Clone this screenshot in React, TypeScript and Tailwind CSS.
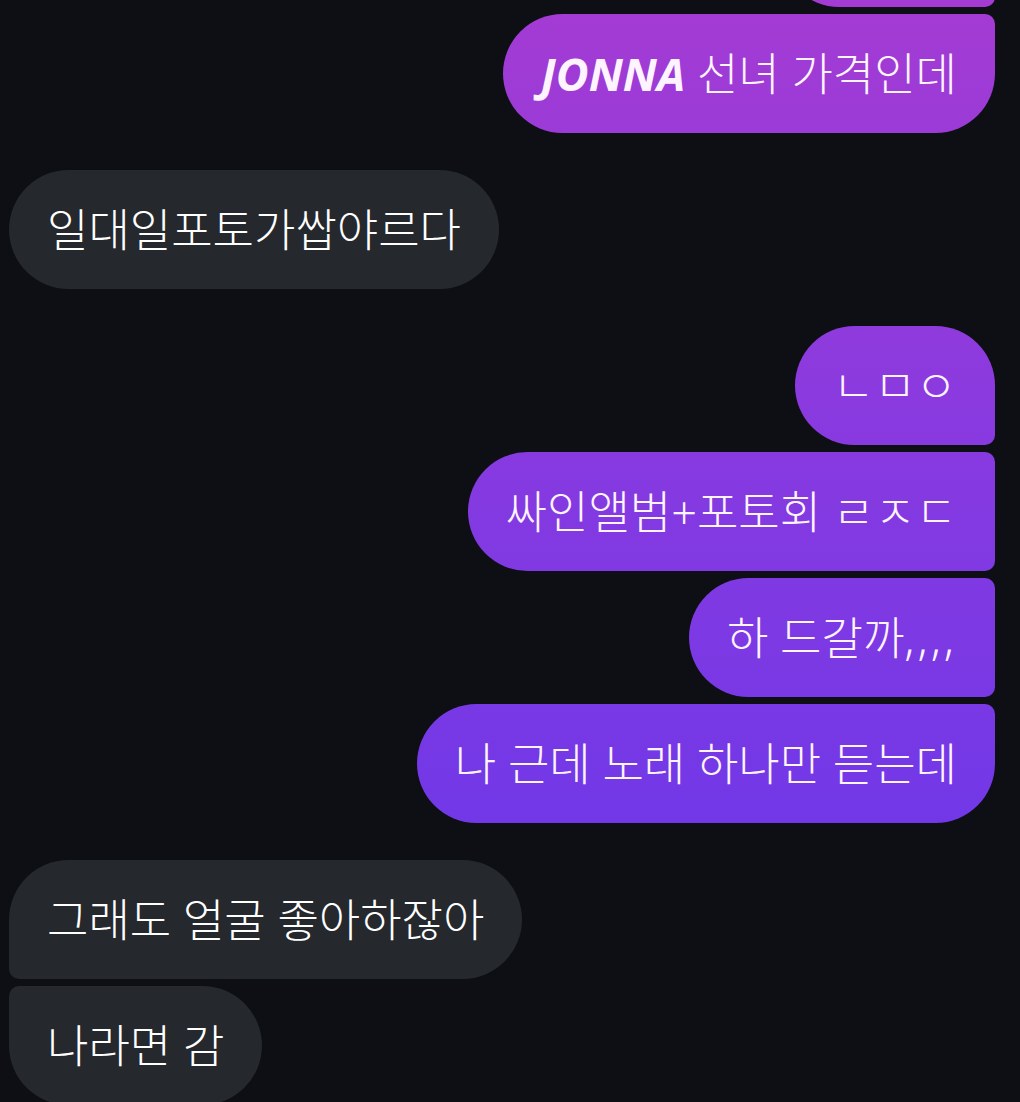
import React from "react";

type Msg = {
  side: "me" | "them";
  text: React.ReactNode;
  corners: string;
  gapTop: string;
};

const font = { fontFamily: '"Noto Sans", "Noto Sans CJK KR", sans-serif' };

const messages: Msg[] = [
  {
    side: "me",
    text: (
      <>
        <span className="font-bold italic">JONNA</span> 선녀 가격인데
      </>
    ),
    corners: "rounded-[60px] rounded-tr-[10px]",
    gapTop: "mt-[7px]",
  },
  {
    side: "them",
    text: "일대일포토가쌉야르다",
    corners: "rounded-[60px]",
    gapTop: "mt-[37px]",
  },
  {
    side: "me",
    text: "ㄴㅁㅇ",
    corners: "rounded-[60px] rounded-br-[10px]",
    gapTop: "mt-[37px]",
  },
  {
    side: "me",
    text: "싸인앨범+포토회 ㄹㅈㄷ",
    corners: "rounded-[60px] rounded-r-[10px]",
    gapTop: "mt-[7px]",
  },
  {
    side: "me",
    text: (
      <>
        하 드갈까<span className="tracking-[3px]">,,,,</span>
      </>
    ),
    corners: "rounded-[60px] rounded-r-[10px]",
    gapTop: "mt-[7px]",
  },
  {
    side: "me",
    text: "나 근데 노래 하나만 듣는데",
    corners: "rounded-[60px] rounded-tr-[10px]",
    gapTop: "mt-[7px]",
  },
  {
    side: "them",
    text: "그래도 얼굴 좋아하잖아",
    corners: "rounded-[60px] rounded-bl-[10px]",
    gapTop: "mt-[37px]",
  },
  {
    side: "them",
    text: "나라면 감",
    corners: "rounded-[60px] rounded-tl-[10px]",
    gapTop: "mt-[7px]",
  },
];

const purple =
  "bg-fixed bg-[linear-gradient(180deg,#a43bd3_0px,#8a3adf_400px,#7238e7_820px,#6b37ea_1102px)]";

const Bubble = ({ msg }: { msg: Msg }) => {
  const mine = msg.side === "me";
  return (
    <div className={`flex ${mine ? "justify-end" : "justify-start"} ${msg.gapTop}`}>
      <div
        className={`h-[119px] flex items-center px-[38px] text-[45px] font-light whitespace-nowrap ${msg.corners} ${
          mine ? `text-[#fdf4ff] ${purple}` : "text-white bg-[#25282d]"
        }`}
      >
        <span>{msg.text}</span>
      </div>
    </div>
  );
};

export default function App() {
  return (
    <div
      className="w-[1020px] h-[1102px] overflow-hidden bg-[#0d0f14] pl-[9px] pr-[25px]"
      style={font}
    >
      {/* tail of the previous message, cut off by the top edge */}
      <div className="flex justify-end -mt-[112px]">
        <div className={`h-[119px] w-[215px] rounded-[60px] rounded-br-[10px] ${purple}`} />
      </div>
      {messages.map((m, i) => (
        <Bubble key={i} msg={m} />
      ))}
    </div>
  );
}
